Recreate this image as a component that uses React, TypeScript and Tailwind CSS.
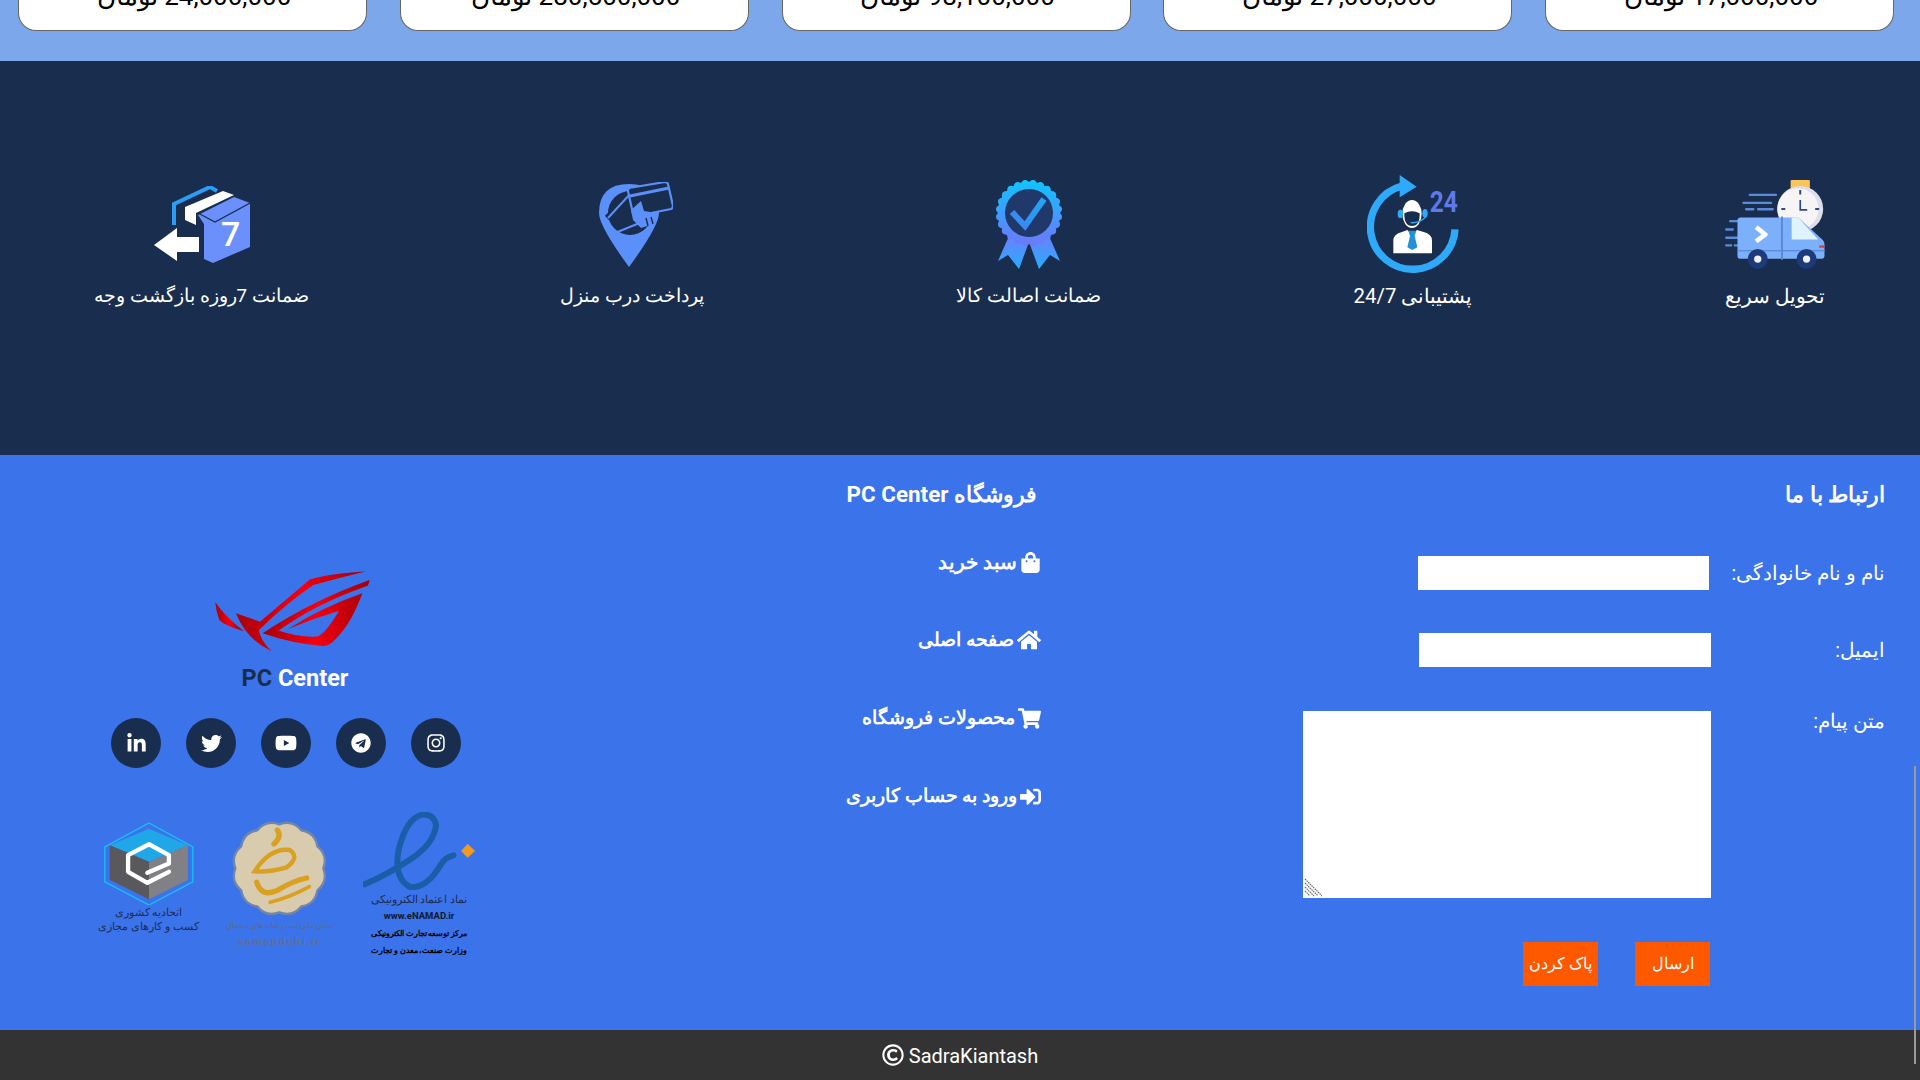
import React from "react";
import { FaShoppingBag, FaHome, FaShoppingCart, FaSignInAlt, FaLinkedinIn, FaTwitter, FaYoutube, FaTelegram, FaInstagram, FaRegCopyright } from "react-icons/fa";

function scallop(cx: number, cy: number, r: number, depth: number, n: number) {
  let d = "";
  for (let i = 0; i < n; i++) {
    const a0 = (i / n) * Math.PI * 2;
    const a1 = ((i + 0.5) / n) * Math.PI * 2;
    const a2 = ((i + 1) / n) * Math.PI * 2;
    if (i === 0) d += `M${(cx + r * Math.cos(a0)).toFixed(2)} ${(cy + r * Math.sin(a0)).toFixed(2)}`;
    d += `Q${(cx + (r + depth) * Math.cos(a1)).toFixed(2)} ${(cy + (r + depth) * Math.sin(a1)).toFixed(2)} ${(cx + r * Math.cos(a2)).toFixed(2)} ${(cy + r * Math.sin(a2)).toFixed(2)}`;
  }
  return d + "Z";
}

function Truck() {
  return (
    <svg width="100" height="89" viewBox="1125 28 300 268">
      <rect x="1322" y="28" width="58" height="26" rx="3" fill="#F9C55A" />
      <circle cx="1351" cy="115" r="69" fill="#DEDDEB" />
      <circle cx="1344" cy="115" r="62" fill="#F6F4F4" />
      <path d="M1351 88V118H1372" stroke="#2B4B8B" strokeWidth="5" fill="none" />
      <path d="M1351 58V72M1294 115H1306M1396 115H1408" stroke="#2B4B8B" strokeWidth="6" fill="none" />
      <g stroke="#5B8AD6" strokeWidth="7" strokeLinecap="round">
        <path d="M1199 73H1278M1180 97H1263M1188 116H1210M1224 116H1268" />
        <path d="M1140 152H1162M1128 177H1148M1175 187H1195M1128 202H1186M1128 225H1143M1154 225H1186" />
      </g>
      <path d="M1162 150Q1162 141 1172 141H1345L1418 208Q1424 214 1424 222V256Q1424 265 1415 265H1170Q1162 265 1162 256Z" fill="#7CB0FA" />
      <path d="M1325 141H1345L1405 207H1325Z" fill="#DFF3FD" />
      <path d="M1162 241H1424" stroke="#5D90DC" strokeWidth="4" />
      <path d="M1296 138V268" stroke="#5A8AD6" strokeWidth="6" />
      <path d="M1218 170L1246 192L1218 213" stroke="#fff" strokeWidth="14" fill="none" strokeLinejoin="round" />
      <rect x="1408" y="225" width="16" height="7" fill="#E53935" />
      <circle cx="1223" cy="266" r="30" fill="#1F3A78" />
      <circle cx="1223" cy="266" r="11" fill="#EEF1F8" />
      <circle cx="1370" cy="266" r="30" fill="#1F3A78" />
      <circle cx="1370" cy="266" r="11" fill="#EEF1F8" />
    </svg>
  );
}

function Support() {
  return (
    <svg dir="ltr" width="92" height="98" viewBox="55 15 276 294">
      <path d="M319 178A127 127 0 1 1 160 48" stroke="#2FA9F9" strokeWidth="22" fill="none" />
      <path d="M153 15L204 50L153 82Z" fill="#2FA9F9" />
      <text x="243" y="127" direction="ltr" fontFamily="Roboto" fontWeight="700" fontSize="86" fill="#6079EA" textLength="84" lengthAdjust="spacingAndGlyphs">24</text>
      <ellipse cx="190" cy="132" rx="29" ry="42" fill="#fff" />
      <path d="M167 130Q190 118 213 130Q214 168 190 168Q166 168 167 130Z" fill="#192E4F" />
      <ellipse cx="155" cy="132" rx="8" ry="13" fill="#2FA9F9" />
      <ellipse cx="229" cy="130" rx="8" ry="13" fill="#2FA9F9" />
      <path d="M186 158Q212 160 232 140" stroke="#2FA9F9" strokeWidth="4" fill="none" />
      <path d="M134 212Q134 192 160 186L176 180L190 194L205 180L225 186Q250 192 250 212V250H134Z" fill="#fff" />
      <path d="M179 182H203L198 198L206 232L191 240L176 232L184 198Z" fill="#2191D8" />
    </svg>
  );
}

function Badge() {
  return (
    <svg width="68" height="89" viewBox="0 0 68 89">
      <defs>
        <linearGradient id="bg1" x1="0" y1="0" x2="0" y2="1">
          <stop offset="0" stopColor="#0FC4FF" />
          <stop offset="1" stopColor="#6F76FA" />
        </linearGradient>
        <linearGradient id="bg2" x1="0" y1="0" x2="0" y2="1">
          <stop offset="0" stopColor="#6C80FA" />
          <stop offset="1" stopColor="#25ADFF" />
        </linearGradient>
        <linearGradient id="bg3" x1="0" y1="1" x2="1" y2="0">
          <stop offset="0" stopColor="#3F84F0" />
          <stop offset="1" stopColor="#1EA7F5" />
        </linearGradient>
      </defs>
      <path d="M14 56L3 81L13 75L24 89L34 62Z" fill="url(#bg2)" />
      <path d="M54 56L65 81L55 75L44 89L34 62Z" fill="url(#bg2)" />
      <path d={scallop(34, 33, 31, 5, 24)} fill="url(#bg1)" />
      <circle cx="34" cy="33" r="24" fill="#20396A" />
      <path d="M17 32L30 46L49 19" stroke="url(#bg3)" strokeWidth="6" fill="none" />
    </svg>
  );
}

function Pin() {
  return (
    <svg className="ml-[8px]" width="74" height="85" viewBox="0 0 74 85">
      <path d="M30 85Q0 44 0 31Q0 2 30 2Q60 2 60 31Q60 44 30 85Z" fill="#5B8FF9" />
      <circle cx="31" cy="31" r="22" fill="#192E4F" />
      <path d="M34 11L8 36" stroke="#192E4F" strokeWidth="6" />
      <path d="M32 11L9 36M16 51L43 40" stroke="#5B8FF9" strokeWidth="2" fill="none" />
      <path d="M30 6L66 0Q68 0 69 2L74 24Q74 26 72 27L37 34Q35 34 34 32L29 9Q29 7 30 6Z" fill="#192E4F" stroke="#5B8FF9" strokeWidth="2.2" />
      <path d="M31 14L70 6" stroke="#5B8FF9" strokeWidth="3" />
      <path d="M32 28L42 19L45 29L58 31L54 42L42 46L34 38Z" fill="#5B8FF9" />
      <path d="M47 36L49 44M52 35L54 42" stroke="#192E4F" strokeWidth="1.4" />
    </svg>
  );
}

function Box() {
  return (
    <svg dir="ltr" width="96" height="77" viewBox="0 0 96 77">
      <path d="M20 39V18L56 1L63 5" stroke="#2D9CF4" strokeWidth="4" fill="none" />
      <path d="M69 5L80 9L42 27V39L31 34V21Z" fill="#fff" />
      <path d="M44 29L80 11L96 17V61L59 77L50 73V38Z" fill="#6B8FFB" />
      <path d="M44 27L61 36L96 17" stroke="#192E4F" strokeWidth="1.2" fill="none" />
      <text x="67" y="60" direction="ltr" fontFamily="Roboto" fontWeight="500" fontSize="34" fill="#fff">7</text>
      <path d="M0 59L23 42V51H45V66H23V75Z" fill="#fff" />
    </svg>
  );
}

function Rog() {
  return (
    <svg width="155" height="80" viewBox="405 63 466 240">
      <defs>
        <linearGradient id="rog" x1="0" y1="0" x2="1" y2="0">
          <stop offset="0" stopColor="#A8000A" />
          <stop offset="0.5" stopColor="#F5000F" />
          <stop offset="1" stopColor="#A00008" />
        </linearGradient>
      </defs>
      <g fill="url(#rog)">
        <path d="M406 157Q435 200 492 244Q432 226 418 210Q408 185 406 157Z" />
        <path d="M468 190L540 215L690 88Q750 70 858 64Q770 85 700 105Q620 160 537 240Q540 270 575 303Q500 270 468 190Z" />
        <path d="M548 250Q700 150 870 90Q868 102 864 107Q710 160 596 242Q650 262 710 260Q735 255 778 182Q700 205 625 237Q730 170 848 130Q815 220 770 265Q750 288 730 288Q640 282 548 250Z" />
      </g>
    </svg>
  );
}

function Enamad() {
  return (
    <div className="ml-[33px] flex w-[113px] flex-col items-center">
      <svg className="blur-[0.4px]" width="113" height="78" viewBox="850 35 340 234">
        <path d="M855 252Q925 222 1000 172Q1062 130 1070 75Q1066 42 1030 42Q980 52 957 150Q942 232 990 260Q1040 268 1085 192Q1095 172 1122 165" stroke="#1A5EA8" strokeWidth="18" fill="none" strokeLinecap="round" />
        <path d="M1165 130L1187 152L1165 172L1145 152Z" fill="#F29A1F" />
      </svg>
      <div className="mt-[3px] text-[11px] leading-[14px] font-medium whitespace-nowrap text-[#1b2c50]">نماد اعتماد الکترونیکی</div>
      <div className="mt-[2px] font-['Roboto'] text-[9.5px] leading-[14px] font-bold whitespace-nowrap text-[#10192f]">www.eNAMAD.ir</div>
      <div className="mt-[2px] text-[8px] leading-[17px] font-semibold whitespace-nowrap text-black">مرکز توسعه تجارت الکترونیکی</div>
      <div className="text-[8px] leading-[17px] font-semibold whitespace-nowrap text-black">وزارت صنعت، معدن و تجارت</div>
    </div>
  );
}

function Samandehi() {
  return (
    <div className="mt-[7px] ml-[29px] flex w-[100px] flex-col items-center">
      <svg className="blur-[0.4px]" width="100" height="100" viewBox="450 55 300 300">
        <path d={scallop(598, 203, 132, 20, 12)} fill="#D9CCAE" stroke="#7386A8" strokeWidth="7" />
        <g fill="none" stroke="#D9A021" strokeLinecap="round">
          <path d="M592 88Q606 108 582 130" strokeWidth="16" />
          <path d="M524 212Q570 140 630 148Q660 170 620 200Q570 215 524 212Z" strokeWidth="13" />
          <path d="M530 245Q545 290 590 270Q640 240 680 232" strokeWidth="16" />
          <path d="M570 305Q630 290 688 258" strokeWidth="11" />
        </g>
      </svg>
      <div className="text-[8px] leading-[14px] whitespace-nowrap text-[#5d6b8c]">نشان ملی ثبت رسانه های دیجیتال</div>
      <div dir="ltr" className="mt-[1px] font-['Roboto'] text-[11px] leading-[16px] font-bold tracking-[1.6px] whitespace-nowrap text-[#5f6f95]">samandehi.ir</div>
    </div>
  );
}

function Union() {
  return (
    <div className="mt-[10px] flex w-[104px] flex-col items-center">
      <svg className="blur-[0.3px]" width="90" height="83" viewBox="70 65 270 250">
        <path d="M205 68L337 140V245L205 315L72 245V140Z" fill="none" stroke="#16C2F5" strokeWidth="4" />
        <path d="M205 85L322 135L205 185L87 135Z" fill="#1FA7E8" />
        <path d="M87 135L205 185V298L87 240Z" fill="#59595D" />
        <path d="M322 135L205 185V298L322 240Z" fill="#808085" />
        <path d="M265 215L200 248L142 215V165L205 132L265 165V190L200 218" stroke="#fff" strokeWidth="13" fill="none" strokeLinecap="round" strokeLinejoin="round" />
      </svg>
      <div className="mt-[1px] text-[11px] leading-[14px] font-medium whitespace-nowrap text-[#1e2e52]">اتحادیه کشوری</div>
      <div className="text-[11px] leading-[14px] font-medium whitespace-nowrap text-[#1e2e52]">کسب و کارهای مجازی</div>
    </div>
  );
}

const prices = ["24,000,000", "280,500,000", "98,100,000", "27,000,000", "17,000,000"];
const features = [
  { t: "تحویل سریع", w: "w-[100px]", s: "text-[20px]", i: <Truck /> },
  { t: "پشتیبانی 24/7", w: "w-[123px]", s: "text-[20.4px]", i: <Support /> },
  { t: "ضمانت اصالت کالا", w: "w-[145px]", s: "text-[18.8px]", i: <Badge /> },
  { t: "پرداخت درب منزل", w: "w-[147px]", s: "text-[18.8px]", i: <Pin /> },
  { t: "ضمانت 7روزه بازگشت وجه", w: "w-[213px]", s: "text-[18.8px]", i: <Box /> },
];
const links = [
  { t: "سبد خرید", s: "text-[20px]", i: <FaShoppingBag size={21} /> },
  { t: "صفحه اصلی", s: "text-[19px]", i: <FaHome size={24} /> },
  { t: "محصولات فروشگاه", s: "text-[19px]", i: <FaShoppingCart size={23} /> },
  { t: "ورود به حساب کاربری", s: "text-[19px]", i: <FaSignInAlt size={21} /> },
];

export default function App() {
  return (
    <div dir="rtl" className="relative h-[1080px] overflow-hidden font-['Roboto','Noto_Sans',sans-serif] text-white">
      <div className="flex h-[61px] flex-row-reverse justify-between bg-[#7CA8EB] pr-[26px] pl-[18px]">
        {prices.map((p) => (
          <div key={p} className="h-[31px] w-[349px] overflow-hidden rounded-b-[18px] border border-t-0 border-[#666] bg-white pl-[3px] text-center text-black">
            <div className="-mt-[21px] text-[26px] leading-[34px] whitespace-nowrap">{p} تومان</div>
          </div>
        ))}
      </div>

      <div className="flex h-[394px] items-start justify-between bg-[#192E4F] px-[95px] pt-[113px]">
        {features.map((f) => (
          <div key={f.t} className={`flex flex-col items-center ${f.w}`}>
            <div className="flex h-[100px] items-center justify-center">{f.i}</div>
            <div className={`mt-[8px] leading-[28px] whitespace-nowrap ${f.s}`}>{f.t}</div>
          </div>
        ))}
      </div>

      <div className="flex h-[575px] bg-[#3B73EA]">
        <form className="w-[879px] pt-[25px] pr-[35px]">
          <h3 className="text-[21.5px] leading-[30px] font-bold">ارتباط با ما</h3>
          <div className="mt-[46px] flex items-start">
            <label className="w-[176px] pt-[4px] text-[19.7px] leading-[28px] whitespace-nowrap">نام و نام خانوادگی:</label>
            <input className="h-[34px] w-[291px] bg-white" />
          </div>
          <div className="mt-[43px] flex items-start">
            <label className="w-[174px] pt-[4px] text-[19.7px] leading-[28px]">ایمیل:</label>
            <input className="h-[34px] w-[292px] bg-white" />
          </div>
          <div className="mt-[44px] flex items-start">
            <label className="-mt-[3px] w-[174px] text-[19.7px] leading-[28px]">متن پیام:</label>
            <div className="relative">
              <textarea className="block h-[187px] w-[408px] resize-none bg-white" />
              <svg className="absolute bottom-[1px] left-[1px]" width="18" height="19" viewBox="0 0 18 19">
                <path d="M1 1L18 18M1 5L14 18M1 9L10 18M1 13L6 18" stroke="#666" strokeWidth="1.2" strokeDasharray="1.5 0.8" />
              </svg>
            </div>
          </div>
          <div className="mt-[44px] mr-[175px] flex gap-[37px]">
            <button type="button" className="h-[44px] w-[75px] bg-[#FF5900] text-[16px] text-white">ارسال</button>
            <button type="button" className="h-[44px] w-[75px] bg-[#FF5900] text-[16px] whitespace-nowrap text-white">پاک کردن</button>
          </div>
        </form>

        <div className="w-[469px] pt-[25px]">
          <h3 className="pr-[4px] text-[22.4px] leading-[28px] font-bold">فروشگاه PC Center</h3>
          <ul className="mt-[40px] flex flex-col gap-[50px]">
            {links.map((l) => (
              <li key={l.t} className={`flex h-[28px] items-center gap-[3px] font-bold whitespace-nowrap ${l.s}`}>
                {l.i}
                <span>{l.t}</span>
              </li>
            ))}
          </ul>
        </div>

        <div className="flex w-[572px] flex-col items-center pt-[116px]">
          <div className="ml-[13px]"><Rog /></div>
          <div dir="ltr" className="mt-[13px] ml-[18px] text-[23.5px] leading-[28px] font-bold">
            <span className="text-[#192E4F]">PC</span> Center
          </div>
          <div dir="ltr" className="mt-[26px] flex gap-[25px]">
            {[<FaLinkedinIn size={21} />, <FaTwitter size={21} />, <FaYoutube size={22} />, <FaTelegram size={20} />, <FaInstagram size={20} />].map((ic, i) => (
              <div key={i} className="flex h-[50px] w-[50px] items-center justify-center rounded-full bg-[#192E4F]">{ic}</div>
            ))}
          </div>
          <div className="mt-[44px] flex items-start">
            <Enamad />
            <Samandehi />
            <Union />
          </div>
        </div>
      </div>

      <div dir="ltr" className="flex h-[50px] items-center justify-center gap-[5px] bg-[#333333] text-[20px]">
        <FaRegCopyright size={22} />
        <span className="pt-[1px]">SadraKiantash</span>
      </div>

      <div className="absolute top-[766px] right-[4px] h-[298px] w-[2px] bg-[#9A9A9A]" />
    </div>
  );
}
